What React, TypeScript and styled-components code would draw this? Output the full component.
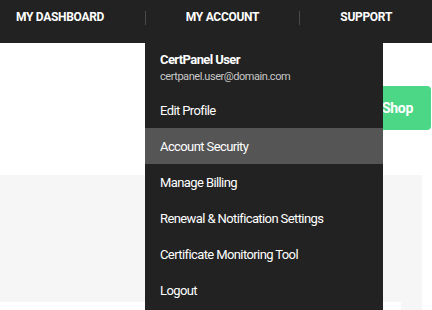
import styled, { createGlobalStyle } from 'styled-components'

const GlobalStyle = createGlobalStyle`
  html, body {
    margin: 0;
    padding: 0;
    background: #ffffff;
    font-family: Roboto, "Liberation Sans", sans-serif;
    overflow: hidden;
  }
`

const Page = styled.div`
  width: 432px;
  height: 310px;
  position: relative;
  overflow: hidden;
`

const Header = styled.header`
  height: 43px;
  background: #222222;
  display: flex;
  align-items: flex-start;
`

const NavItem = styled.div<{ $width: number; $first?: boolean }>`
  position: relative;
  width: ${p => p.$width}px;
  height: 33px;
  display: flex;
  align-items: center;
  justify-content: ${p => (p.$first ? 'flex-start' : 'center')};
  padding-left: ${p => (p.$first ? '16px' : '0')};
  box-sizing: border-box;
  color: #ffffff;
  font-size: 12px;
  font-weight: 700;
  text-transform: uppercase;
  letter-spacing: -0.3px;
`

const Divider = styled.span`
  width: 1px;
  height: 14px;
  margin-top: 11px;
  background: #4a4a4a;
`

const Menu = styled.div`
  position: absolute;
  top: 43px;
  left: 145px;
  width: 238px;
  height: 280px;
  background: #222222;
  z-index: 5;
  padding-top: 8px;
  box-sizing: border-box;
  letter-spacing: -0.6px;
`

const UserBlock = styled.div`
  padding: 0 15px 8px;
`

const UserName = styled.div`
  color: #ffffff;
  font-size: 13px;
  font-weight: 700;
  line-height: 18px;
`

const UserEmail = styled.div`
  color: #c8c8c8;
  font-size: 11px;
  line-height: 14px;
  margin-top: 1px;
  letter-spacing: -0.45px;
`

const MenuItem = styled.div<{ $active?: boolean }>`
  height: 36px;
  display: flex;
  align-items: center;
  padding: 0 15px;
  color: #ffffff;
  font-size: 13px;
  background: ${p => (p.$active ? '#555555' : 'transparent')};
`

const Content = styled.main`
  display: flex;
  flex-direction: column;
`

const ActionRow = styled.div`
  display: flex;
  justify-content: flex-end;
  padding: 43px 1px 0 0;
`

const ShopButton = styled.button`
  height: 44px;
  width: 86px;
  border: none;
  border-radius: 4px;
  background: #4cd787;
  color: #ffffff;
  font-family: Roboto, "Liberation Sans", sans-serif;
  font-size: 14px;
  font-weight: 700;
  letter-spacing: -0.3px;
  text-align: right;
  padding: 0 18px 0 0;
`

const Panel = styled.section`
  margin-top: 45px;
  width: 422px;
  height: 127px;
  background: #f6f6f6;
`

const PanelFoot = styled.div`
  display: flex;
  justify-content: flex-end;
  width: 422px;
`

const FootTab = styled.div`
  width: 21px;
  height: 10px;
  background: #f6f6f6;
`

const menuItems = [
  'Edit Profile',
  'Account Security',
  'Manage Billing',
  'Renewal & Notification Settings',
  'Certificate Monitoring Tool',
  'Logout',
]

export default function App() {
  return (
    <Page>
      <GlobalStyle />
      <Header>
        <NavItem $width={145} $first>My Dashboard</NavItem>
        <Divider />
        <NavItem $width={154}>My Account</NavItem>
        <Divider />
        <NavItem $width={132}>Support</NavItem>
      </Header>
      <Menu>
        <UserBlock>
          <UserName>CertPanel User</UserName>
          <UserEmail>certpanel.user@domain.com</UserEmail>
        </UserBlock>
        {menuItems.map(item => (
          <MenuItem key={item} $active={item === 'Account Security'}>
            {item}
          </MenuItem>
        ))}
      </Menu>
      <Content>
        <ActionRow>
          <ShopButton>Shop</ShopButton>
        </ActionRow>
        <Panel />
        <PanelFoot>
          <FootTab />
        </PanelFoot>
      </Content>
    </Page>
  )
}
